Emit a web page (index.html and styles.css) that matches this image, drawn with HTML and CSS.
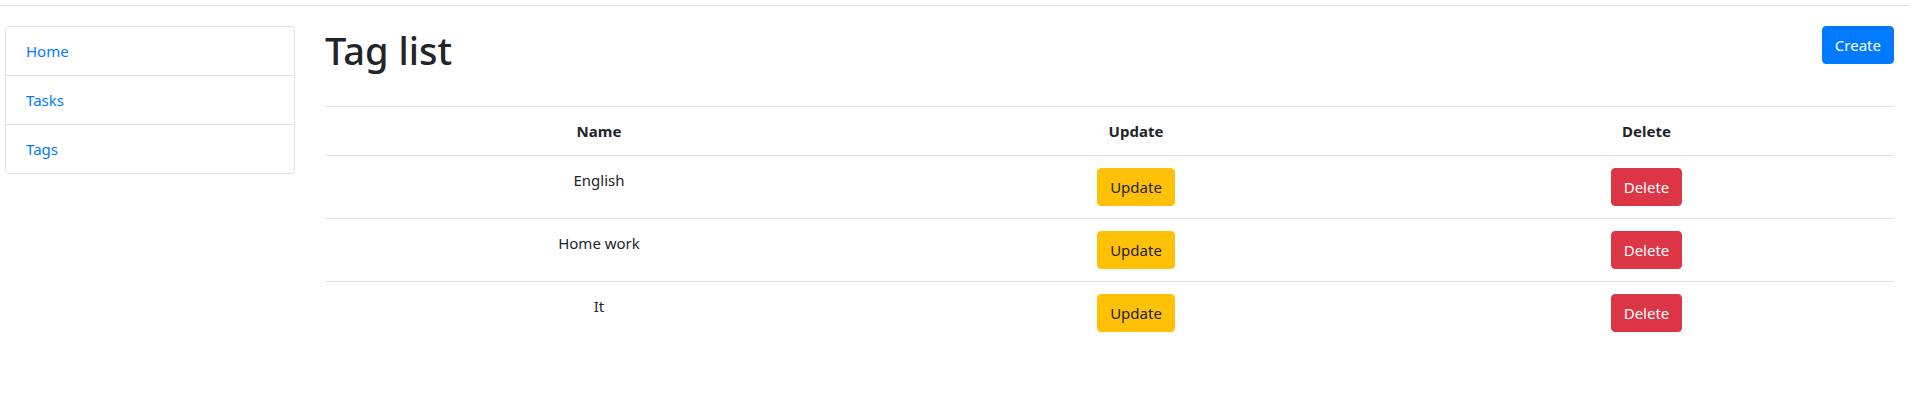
FILE: index.html
```html
<!DOCTYPE html>
<html lang="en">
<head>
<meta charset="utf-8">
<title>Tag list</title>
<link rel="stylesheet" href="styles.css">
</head>
<body>
<div class="topline"></div>
<div class="layout">
  <nav class="sidebar">
    <a class="side-item" href="#">Home</a>
    <a class="side-item" href="#">Tasks</a>
    <a class="side-item" href="#">Tags</a>
  </nav>
  <main class="main">
    <div class="page-head">
      <h1 class="title">Tag list</h1>
      <a class="btn btn-primary" href="#">Create</a>
    </div>
    <table class="table">
      <colgroup>
        <col class="col-name">
        <col class="col-update">
        <col class="col-delete">
      </colgroup>
      <thead>
        <tr><th>Name</th><th>Update</th><th>Delete</th></tr>
      </thead>
      <tbody>
        <tr><td>English</td><td><a class="btn btn-warning" href="#">Update</a></td><td><a class="btn btn-danger" href="#">Delete</a></td></tr>
        <tr><td>Home work</td><td><a class="btn btn-warning" href="#">Update</a></td><td><a class="btn btn-danger" href="#">Delete</a></td></tr>
        <tr><td>It</td><td><a class="btn btn-warning" href="#">Update</a></td><td><a class="btn btn-danger" href="#">Delete</a></td></tr>
      </tbody>
    </table>
  </main>
</div>
</body>
</html>
```
FILE: styles.css
```css
* { box-sizing: border-box; }
html, body { margin: 0; padding: 0; background: #fff; }
body {
  font-family: "Noto Sans", "Open Sans", sans-serif;
  font-size: 16px;
  line-height: 24px;
  color: #212529;
}
.topline {
  margin-top: 5px;
  border-top: 1px solid #dee2e6;
  height: 0;
}
.layout {
  display: flex;
  align-items: flex-start;
  gap: 30px;
  padding: 20px 15px 0 5px;
}
.sidebar {
  width: 290px;
  flex: none;
  display: flex;
  flex-direction: column;
  border: 1px solid #dee2e6;
  border-radius: 4px;
}
.side-item {
  display: block;
  padding: 12px 20px;
  color: #007bff;
  text-decoration: none;
  font-size: 15px;
}
.side-item + .side-item { border-top: 1px solid #dee2e6; }
.main { flex: 1; min-width: 0; }
.page-head {
  display: flex;
  justify-content: space-between;
  align-items: flex-start;
  margin-bottom: 32px;
}
.title {
  margin: 0;
  font-size: 38px;
  font-weight: 500;
  line-height: 48px;
}
.btn {
  display: inline-block;
  padding: 6px 12px;
  border: 1px solid transparent;
  border-radius: 4px;
  font-size: 15px;
  line-height: 24px;
  text-decoration: none;
  text-align: center;
}
.btn-primary { background: #007bff; border-color: #007bff; color: #fff; }
.btn-warning { background: #ffc107; border-color: #ffc107; color: #212529; }
.btn-danger { background: #dc3545; border-color: #dc3545; color: #fff; }
.table {
  width: 100%;
  border-collapse: collapse;
  table-layout: fixed;
}
.col-name { width: 548px; }
.col-update { width: 526px; }
.table th, .table td {
  padding: 12px;
  text-align: center;
  vertical-align: top;
  border-top: 1px solid #dee2e6;
  font-size: 15px;
}
.table th { font-weight: 700; }
```
